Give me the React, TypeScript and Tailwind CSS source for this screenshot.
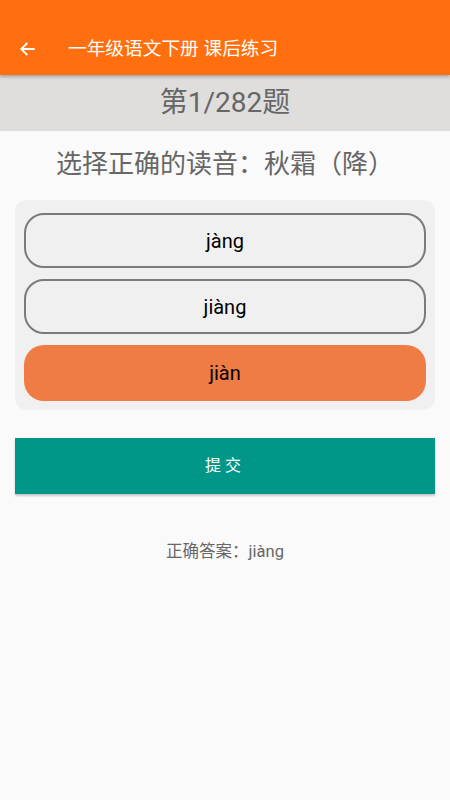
import React, { useState } from 'react';

const options = ['jàng', 'jiàng', 'jiàn'];

export default function App() {
  const [selected, setSelected] = useState(2);

  return (
    <div
      className="w-[450px] min-h-[800px] bg-[#fafafa] flex flex-col"
      style={{ fontFamily: 'Roboto, "Noto Sans CJK SC", sans-serif' }}
    >
      <header className="h-[75px] bg-[#ff6f0f] flex items-end pb-[14px] shadow-[0_2px_3px_rgba(0,0,0,0.25)] relative z-10">
        <button className="w-[54px] h-[24px] flex items-center justify-center pl-[1px] text-white">
          <svg width="18" height="18" viewBox="0 0 24 24" fill="none" stroke="currentColor" strokeWidth="2.4">
            <path d="M21 12H4M11 4l-8 8 8 8" />
          </svg>
        </button>
        <h1 className="ml-[14px] text-white text-[18.7px] leading-[24px]">一年级语文下册 课后练习</h1>
      </header>

      <div className="h-[56px] bg-[#dfdedc] flex items-center justify-center text-[28px] text-[#666]">
        第1/282题
      </div>

      <p className="mt-[16px] text-center text-[26px] leading-[34px] text-[#666]">选择正确的读音：秋霜（降）</p>

      <div className="mx-[15px] mt-[19px] bg-[#f0f0f0] rounded-[12px] px-[9px] pt-[13px] pb-[9px] flex flex-col gap-[11px]">
        {options.map((o, i) => (
          <button
            key={o}
            onClick={() => setSelected(i)}
            className={
              i === selected
                ? 'h-[56px] rounded-[20px] bg-[#ef7b45] text-[20px] text-black'
                : 'h-[55px] rounded-[20px] border-2 border-[#7a7a7a] bg-[#f0f0f0] text-[20px] text-black'
            }
          >
            {o}
          </button>
        ))}
      </div>

      <button className="mx-[15px] mt-[28px] h-[56px] bg-[#009688] text-white text-[16px] tracking-[4px] shadow-[0_2px_2px_rgba(0,0,0,0.2)]">
        提交
      </button>

      <p className="mt-[46px] text-center text-[16.5px] text-[#666]">正确答案：jiàng</p>
    </div>
  );
}
